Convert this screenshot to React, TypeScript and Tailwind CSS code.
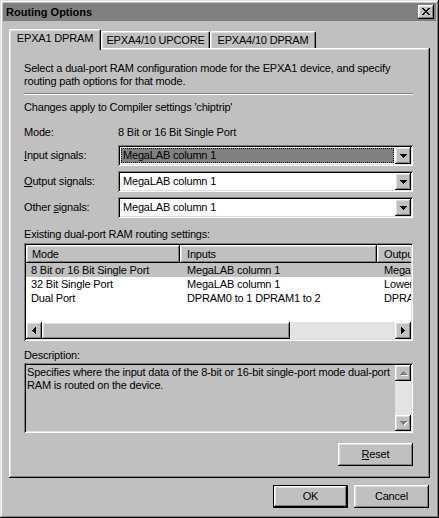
import type { ReactNode } from 'react'

// Win9x bevels
const RAISED = 'shadow-[inset_-1px_-1px_#000,inset_1px_1px_#fff,inset_-2px_-2px_#808080,inset_2px_2px_#dfdfdf]'
const SUNKEN = 'shadow-[inset_1px_1px_#808080,inset_-1px_-1px_#fff,inset_2px_2px_#000,inset_-2px_-2px_#dfdfdf]'
const WINDOW = 'shadow-[inset_-1px_-1px_#000,inset_1px_1px_#dfdfdf,inset_-2px_-2px_#808080,inset_2px_2px_#fff]'

const CLOSE_X = ['XX....XX', '.XX..XX.', '..XXXX..', '...XX...', '..XXXX..', '.XX..XX.', 'XX....XX']
const DOWN = ['XXXXXXX', '.XXXXX.', '..XXX..', '...X...']
const UP = ['...X...', '..XXX..', '.XXXXX.', 'XXXXXXX']
const LEFT = ['...X', '..XX', '.XXX', 'XXXX', '.XXX', '..XX', '...X']
const RIGHT = ['X...', 'XX..', 'XXX.', 'XXXX', 'XXX.', 'XX..', 'X...']

function Glyph({ rows, color = '#000', disabled }: { rows: string[]; color?: string; disabled?: boolean }) {
  const w = rows[0].length + 1
  const h = rows.length + 1
  const cells: { x: number; y: number }[] = []
  rows.forEach((r, y) => r.split('').forEach((c, x) => c === 'X' && cells.push({ x, y })))
  return (
    <svg width={w} height={h} viewBox={`0 0 ${w} ${h}`} shapeRendering="crispEdges">
      {disabled && cells.map(({ x, y }) => <rect key={`s${x}-${y}`} x={x + 1} y={y + 1} width={1} height={1} fill="#fff" />)}
      {cells.map(({ x, y }) => (
        <rect key={`${x}-${y}`} x={x} y={y} width={1} height={1} fill={disabled ? '#808080' : color} />
      ))}
    </svg>
  )
}

function ArrowButton({ rows, disabled, className = '' }: { rows: string[]; disabled?: boolean; className?: string }) {
  return (
    <div className={`bg-[#c0c0c0] flex items-center justify-center shrink-0 ${RAISED} ${className}`}>
      <div className="pl-[1px] pt-[1px]">
        <Glyph rows={rows} disabled={disabled} />
      </div>
    </div>
  )
}

function Combo({ value, focused }: { value: string; focused?: boolean }) {
  return (
    <div className={`flex-1 h-[21px] bg-white p-[2px] flex ${SUNKEN}`}>
      <div className="flex-1 flex p-[1px]">
        <div
          className={`flex-1 flex items-center pl-[1px] whitespace-nowrap ${
            focused ? 'bg-[#808080] border border-dotted border-black' : 'border border-transparent'
          }`}
        >
          {value}
        </div>
      </div>
      <ArrowButton rows={DOWN} className="w-[16px] h-[17px]" />
    </div>
  )
}

function SignalRow({ label, value, focused }: { label: ReactNode; value: string; focused?: boolean }) {
  return (
    <div className="flex items-center">
      <div className="w-[94px] shrink-0">{label}</div>
      <Combo value={value} focused={focused} />
    </div>
  )
}

const ROWS = [
  { mode: '8 Bit or 16 Bit Single Port', inputs: 'MegaLAB column 1', outputs: 'MegaLAB column 1', selected: true },
  { mode: '32 Bit Single Port', inputs: 'MegaLAB column 1', outputs: 'Lower MegaLAB' },
  { mode: 'Dual Port', inputs: 'DPRAM0 to 1 DPRAM1 to 2', outputs: 'DPRAM0 to 1' },
]

export default function App() {
  return (
    <div
      className={`w-[439px] h-[518px] bg-[#c0c0c0] p-[3px] flex flex-col text-black text-[11px] leading-[13px] tracking-[-0.18px] font-['Liberation_Sans',Arial,sans-serif] ${WINDOW}`}
    >
      {/* Title bar (inactive) */}
      <div className="h-[18px] shrink-0 bg-[#808080] flex items-center justify-between pl-[3px] pr-[2px]">
        <span className="font-bold text-black tracking-normal">Routing Options</span>
        <div className={`w-[16px] h-[14px] bg-[#c0c0c0] flex items-center justify-center ${RAISED}`}>
          <Glyph rows={CLOSE_X} />
        </div>
      </div>

      <div className="flex flex-col px-[6px] pt-[8px]">
        {/* Tabs */}
        <div className="flex items-start h-[19px]">
          <div className="relative z-10 w-[92px] h-[21px] bg-[#c0c0c0] border-t border-l border-white border-r border-r-black rounded-tl-[2px] rounded-tr-[2px] shadow-[inset_-1px_0_#808080,inset_1px_1px_#dfdfdf] flex justify-center pt-[2px]">
            EPXA1 DPRAM
          </div>
          <div className="mt-[2px] w-[109px] h-[17px] border-t border-l border-white border-r border-r-black rounded-tl-[2px] rounded-tr-[2px] shadow-[inset_-1px_0_#808080,inset_1px_1px_#dfdfdf] flex justify-center pt-[2px]">
            EPXA4/10 UPCORE
          </div>
          <div className="mt-[2px] w-[106px] h-[17px] border-t border-l border-white border-r border-r-black rounded-tl-[2px] rounded-tr-[2px] shadow-[inset_-1px_0_#808080,inset_1px_1px_#dfdfdf] flex justify-center pt-[2px]">
            EPXA4/10 DPRAM
          </div>
        </div>

        {/* Tab panel */}
        <div className={`h-[430px] flex flex-col pl-[15px] pr-[17px] pt-[14px] ${RAISED}`}>
          <p className="whitespace-nowrap">
            Select a dual-port RAM configuration mode for the EPXA1 device, and specify
            <br />
            routing path options for that mode.
          </p>
          <div className="mt-[5px] h-[2px] border-t border-t-[#808080] border-b border-b-white" />
          <p className="mt-[6px]">Changes apply to Compiler settings 'chiptrip'</p>

          <div className="mt-[12px] flex">
            <div className="w-[94px] shrink-0">Mode:</div>
            <div>8 Bit or 16 Bit Single Port</div>
          </div>

          <div className="mt-[6px] flex flex-col gap-[5px]">
            <SignalRow
              label={
                <>
                  <u>I</u>nput signals:
                </>
              }
              value="MegaLAB column 1"
              focused
            />
            <SignalRow
              label={
                <>
                  <u>O</u>utput signals:
                </>
              }
              value="MegaLAB column 1"
            />
            <SignalRow
              label={
                <>
                  Other <u>s</u>ignals:
                </>
              }
              value="MegaLAB column 1"
            />
          </div>

          <p className="mt-[10px]">Existing dual-port RAM routing settings:</p>

          {/* List view */}
          <div className={`mt-[2px] h-[98px] bg-white p-[2px] flex flex-col ${SUNKEN}`}>
            <div className="h-[18px] shrink-0 flex overflow-hidden">
              <div className={`w-[154px] shrink-0 bg-[#c0c0c0] pl-[6px] flex items-center ${RAISED}`}>Mode</div>
              <div className={`w-[197px] shrink-0 bg-[#c0c0c0] pl-[7px] flex items-center ${RAISED}`}>Inputs</div>
              <div className={`w-[120px] shrink-0 bg-[#c0c0c0] pl-[7px] flex items-center whitespace-nowrap ${RAISED}`}>
                Outputs
              </div>
            </div>
            <div className="h-[59px] shrink-0 flex flex-col leading-[14px] overflow-hidden">
              {ROWS.map((r) => (
                <div key={r.mode} className={`h-[14px] flex whitespace-nowrap ${r.selected ? 'bg-[#c0c0c0]' : ''}`}>
                  <div className="w-[154px] shrink-0 pl-[5px]">{r.mode}</div>
                  <div className="w-[197px] shrink-0 pl-[7px]">{r.inputs}</div>
                  <div className="w-[120px] shrink-0 pl-[7px]">{r.outputs}</div>
                </div>
              ))}
            </div>
            <div className="h-[17px] shrink-0 flex">
              <ArrowButton rows={LEFT} className="w-[16px] h-[17px]" />
              <div className={`w-[248px] h-[17px] bg-[#c0c0c0] ${RAISED}`} />
              <div className="flex-1 bg-[#e3e3e3]" />
              <ArrowButton rows={RIGHT} className="w-[16px] h-[17px]" />
            </div>
          </div>

          <p className="mt-[8px]">Description:</p>
          <div className={`mt-[1px] h-[70px] p-[2px] flex ${SUNKEN}`}>
            <div className="flex-1 pl-[1px] pt-[1px] whitespace-nowrap">
              Specifies where the input data of the 8-bit or 16-bit single-port mode dual-port
              <br />
              RAM is routed on the device.
            </div>
            <div className="w-[16px] flex flex-col">
              <ArrowButton rows={UP} disabled className="w-[16px] h-[16px]" />
              <div className="flex-1 bg-[#e3e3e3]" />
              <ArrowButton rows={DOWN} disabled className="w-[16px] h-[16px]" />
            </div>
          </div>

          <div className="mt-[10px] flex justify-end">
            <button className={`w-[75px] h-[23px] bg-[#c0c0c0] flex items-center justify-center ${RAISED}`}>
              <span>
                <u>R</u>eset
              </span>
            </button>
          </div>
        </div>
      </div>

      {/* Dialog buttons */}
      <div className="mt-[7px] flex justify-end gap-[6px] pr-[7px]">
        <button className="w-[75px] h-[23px] border border-black bg-[#c0c0c0] flex">
          <div className={`flex-1 flex items-center justify-center ${RAISED}`}>OK</div>
        </button>
        <button className={`w-[75px] h-[23px] bg-[#c0c0c0] flex items-center justify-center ${RAISED}`}>Cancel</button>
      </div>
    </div>
  )
}
